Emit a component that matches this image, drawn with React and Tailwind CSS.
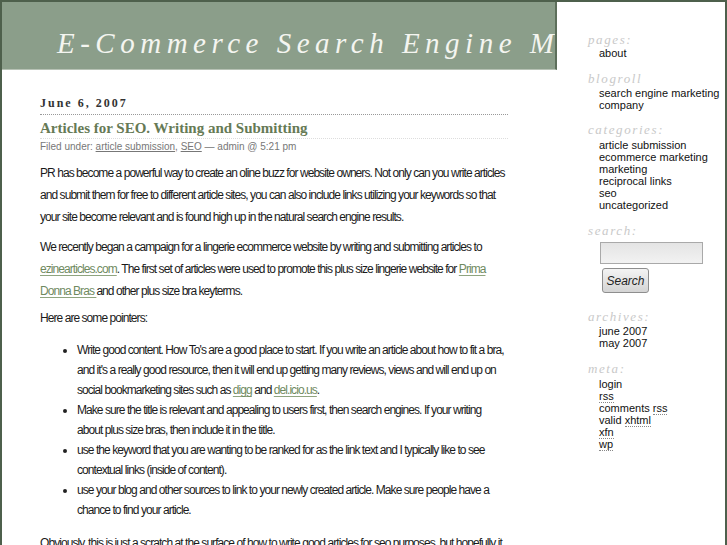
const sans = { fontFamily: '"Liberation Sans", Arial, sans-serif' };

const SideHead = ({ children, className = "" }) => (
  <h2
    className={`pl-[31px] text-[13px] leading-[14px] italic tracking-[1.6px] text-[#c9c9c9] font-normal ${className}`}
    style={{ fontFamily: '"Liberation Serif", "Times New Roman", serif' }}
  >
    {children}
  </h2>
);

const SideList = ({ items, className = "" }) => (
  <ul className={`pl-[42px] text-[11px] leading-[12px] text-[#111] ${className}`}>
    {items.map((it, i) => (
      <li key={i}>{it}</li>
    ))}
  </ul>
);

const Abbr = ({ children }) => (
  <span className="border-b border-dotted border-[#888]">{children}</span>
);

const A = ({ children }) => (
  <a href="#" className="text-[#6f8a5f] underline underline-offset-[2px] decoration-[#8fa47f]">
    {children}
  </a>
);

export default function App() {
  return (
    <div className="min-h-[545px] bg-[#4e604c] pt-[2px] pl-[2px] pr-[2px] overflow-hidden" style={sans}>
      <div className="flex bg-white h-[543px] overflow-hidden">
        {/* main column */}
        <div className="w-[555px] shrink-0">
          <div className="h-[68px] bg-[#8b9e8a] border-b border-[#b7c2b5] border-r-[2px] border-r-[#5d6f5b] overflow-hidden whitespace-nowrap pl-[55px] pt-[26px]">
            <h1
              className="text-[29px] leading-[30px] italic tracking-[5.5px] text-[#f4f5f0] font-normal"
              style={{ fontFamily: '"Liberation Serif", "Times New Roman", serif' }}
            >
              E-Commerce Search Engine Marketing
            </h1>
          </div>

          <div className="pl-[38px] pr-[49px]">
            <div
              className="mt-[25px] text-[12px] leading-[16px] font-bold tracking-[2px] text-[#333]"
              style={{ fontFamily: '"Liberation Serif", "Times New Roman", serif' }}
            >
              June 6, 2007
            </div>
            <div className="border-b border-dotted border-[#999] mt-[3px]" />
            <h3
              className="mt-[4px] text-[15px] leading-[18px] font-bold text-[#667a55]"
              style={{ fontFamily: '"Liberation Serif", "Times New Roman", serif' }}
            >
              Articles for SEO. Writing and Submitting
            </h3>
            <div className="border-b border-dotted border-[#ddd] mt-[1px]" />
            <div className="text-[10px] leading-[12px] text-[#777] mt-[2px]">
              Filed under: <a href="#" className="underline">article submission</a>,{" "}
              <a href="#" className="underline">SEO</a> — admin @ 5:21 pm
            </div>

            <div className="text-[12px] leading-[22px] text-[#1a1a1a] tracking-[-0.94px] mt-[9px]">
              <p>
                PR has become a powerful way to create an oline buzz for website owners. Not only can you write articles
                and submit them for free to different article sites, you can also include links utilizing your keywords
                so that your site become relevant and is found high up in the natural search engine results.
              </p>
              <p className="mt-[8px]">
                We recently began a campaign for a lingerie ecommerce website by writing and submitting articles to{" "}
                <A>ezinearticles.com</A>. The first set of articles were used to promote this plus size lingerie website
                for <A>Prima Donna Bras </A>and other plus size bra keyterms.
              </p>
              <p className="mt-[5px]">Here are some pointers:</p>
              <ul className="mt-[11px] leading-[20px] list-disc pl-[37px] marker:text-[#222]">
                <li>
                  Write good content. How To's are a good place to start. If you write an article about how to fit a
                  bra, and it's a really good resource, then it will end up getting many reviews, views and will end up
                  on social bookmarketing sites such as <A>digg</A> and <A>del.icio.us</A>.
                </li>
                <li>
                  Make sure the title is relevant and appealing to users first, then search engines. If your writing
                  about plus size bras, then include it in the title.
                </li>
                <li>
                  use the keyword that you are wanting to be ranked for as the link text and I typically like to see
                  contextual links (inside of content).
                </li>
                <li>
                  use your blog and other sources to link to your newly created article. Make sure people have a
                  chance to find your article.
                </li>
              </ul>
              <p className="mt-[12px]">
                Obviously, this is just a scratch at the surface of how to write good articles for seo purposes, but
                hopefully it gives you some ideas.
              </p>
            </div>
          </div>
        </div>

        {/* sidebar */}
        <div className="w-[168px] shrink-0">
          <SideHead className="mt-[31px]">pages:</SideHead>
          <SideList items={["about"]} />

          <SideHead className="mt-[13px]">blogroll</SideHead>
          <SideList className="mt-[1px]" items={["search engine marketing", "company"]} />

          <SideHead className="mt-[12px]">categories:</SideHead>
          <SideList
            className="mt-[2px]"
            items={[
              "article submission",
              "ecommerce marketing",
              "marketing",
              "reciprocal links",
              "seo",
              "uncategorized",
            ]}
          />

          <SideHead className="mt-[13px]">search:</SideHead>
          <div className="pl-[43px] mt-[4px]">
            <input
              type="text"
              className="block w-[103px] h-[22px] border border-[#a9a9a9] bg-gradient-to-b from-[#e4e4e4] to-[#f2f2f2] outline-none"
            />
            <button className="mt-[4px] ml-[2px] w-[47px] h-[25px] rounded-[3px] border border-[#8e8e8e] bg-gradient-to-b from-[#f4f4f4] to-[#d4d4d4] text-[12px] italic text-[#222]">
              Search
            </button>
          </div>

          <SideHead className="mt-[17px]">archives:</SideHead>
          <SideList className="mt-[1px]" items={["june 2007", "may 2007"]} />

          <SideHead className="mt-[13px]">meta:</SideHead>
          <SideList
            className="mt-[2px]"
            items={[
              "login",
              <Abbr>rss</Abbr>,
              <>
                comments <Abbr>rss</Abbr>
              </>,
              <>
                valid <Abbr>xhtml</Abbr>
              </>,
              <Abbr>xfn</Abbr>,
              <Abbr>wp</Abbr>,
            ]}
          />
        </div>
      </div>
    </div>
  );
}
